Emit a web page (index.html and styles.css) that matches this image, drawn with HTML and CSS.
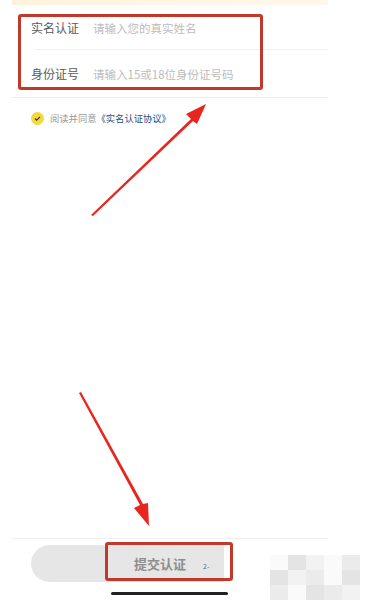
FILE: index.html
```html
<!DOCTYPE html>
<html>
<head>
  <meta charset="utf-8">
  <title>实名认证</title>
  <link rel="stylesheet" href="styles.css">
</head>
<body>
  <div class="page">
    <div class="screen">
      <div class="top-strip"></div>
      <div class="form">
        <div class="form-row first">
          <span class="label">实名认证</span>
          <span class="placeholder">请输入您的真实姓名</span>
        </div>
        <div class="form-row last">
          <span class="label">身份证号</span>
          <span class="placeholder">请输入15或18位身份证号码</span>
        </div>
      </div>
      <div class="agree">
        <span class="check">
          <svg width="7" height="5" viewBox="0 0 8 6"><path d="M1 3 L3 5 L7 1" fill="none" stroke="#333" stroke-width="1.4"/></svg>
        </span>
        <span class="agree-text">阅读并同意</span><span class="agree-link">《实名认证协议》</span>
      </div>
      <div class="spacer"></div>
      <div class="footer">
        <div class="submit">提交认证</div>
        <span class="mark">2-</span>
        <div class="cover"></div>
      </div>
      <div class="home-bar"></div>
    </div>

    <div class="mosaic">
      <i class="m1"></i><i class="m2"></i><i class="m3"></i><i class="m1"></i><i class="m4"></i>
      <i class="m2"></i><i class="m3"></i><i class="m4"></i><i class="m1"></i><i class="m2"></i>
      <i class="m4"></i><i class="m1"></i><i class="m2"></i><i class="m4"></i><i class="m3"></i>
    </div>

    <div class="hl hl-form"></div>
    <div class="hl hl-btn"></div>

    <svg class="arrows" width="389" height="612" viewBox="0 0 389 612">
      <path d="M91 215 L191 119 L186 114 L206 104 L197 124 L193 121 L93 216 Z" fill="#e8251e"/>
      <path d="M79 393 L140 505 L134 508 L149 526 L148 503 L143 504 L81 392 Z" fill="#e8251e"/>
    </svg>
  </div>
</body>
</html>
```

FILE: styles.css
```css
body {
  margin: 0;
  background: #fff;
  font-family: "Noto Sans CJK SC", "Noto Sans", sans-serif;
}

.page {
  position: relative;
  width: 389px;
  height: 612px;
  overflow: hidden;
}

.screen {
  width: 316px;
  margin-left: 12px;
  height: 612px;
  display: flex;
  flex-direction: column;
}

.top-strip {
  height: 5px;
  background: linear-gradient(90deg, #fdf3dc, #fff8ea);
}

.form-row {
  position: relative;
  height: 46px;
  display: flex;
  align-items: center;
  padding-left: 19px;
}

.form-row.first {
  height: 45px;
}

.form-row.first::after {
  content: "";
  position: absolute;
  left: 23px;
  right: 0;
  bottom: 0;
  height: 1px;
  background: #f0f0f0;
}

.form-row.last {
  height: 47px;
  border-bottom: 1px solid #eeeeee;
}

.label {
  width: 62px;
  font-size: 12px;
  color: #5a5a5a;
}

.placeholder {
  font-size: 11.5px;
  color: #bcbcbc;
}

.agree {
  display: flex;
  align-items: center;
  padding: 13px 0 0 19px;
  font-size: 9.3px;
}

.check {
  width: 13px;
  height: 13px;
  border-radius: 50%;
  background: #f5d93a;
  display: flex;
  align-items: center;
  justify-content: center;
  margin-right: 6px;
}

.agree-text {
  color: #9a9a9a;
}

.agree-link {
  color: #2f4d7e;
}

.spacer {
  flex: 1;
}

.footer {
  position: relative;
  height: 52px;
  border-top: 1px solid #f0f0f0;
  padding-top: 6px;
  box-sizing: border-box;
}

.submit {
  margin-left: 19px;
  width: 258px;
  height: 37px;
  border-radius: 19px;
  background: #e6e6e6;
  color: #8d8d8d;
  font-size: 13px;
  font-weight: bold;
  display: flex;
  align-items: center;
  justify-content: center;
}

.mark {
  position: absolute;
  left: 191px;
  top: 22px;
  font-size: 7px;
  color: #666;
}

.cover {
  position: absolute;
  left: 212px;
  top: 2px;
  width: 110px;
  height: 46px;
  background: #fff;
}

.home-bar {
  width: 117px;
  height: 3px;
  border-radius: 2px;
  background: #222;
  margin: 2px 0 17px 99px;
}

.mosaic {
  position: absolute;
  left: 270px;
  top: 555px;
  width: 90px;
  display: grid;
  grid-template-columns: repeat(5, 18px);
  grid-auto-rows: 15px;
}

.mosaic i {
  display: block;
}

.m1 { background: #fafafa; }
.m2 { background: #e4e4e4; }
.m3 { background: #f2f2f2; }
.m4 { background: #ebebeb; }

.hl {
  position: absolute;
  border: 3px solid #c0392b;
  border-radius: 3px;
}

.hl-form {
  left: 18px;
  top: 14px;
  width: 239px;
  height: 70px;
}

.hl-btn {
  left: 105px;
  top: 542px;
  width: 122px;
  height: 33px;
}

.arrows {
  position: absolute;
  left: 0;
  top: 0;
}
```
